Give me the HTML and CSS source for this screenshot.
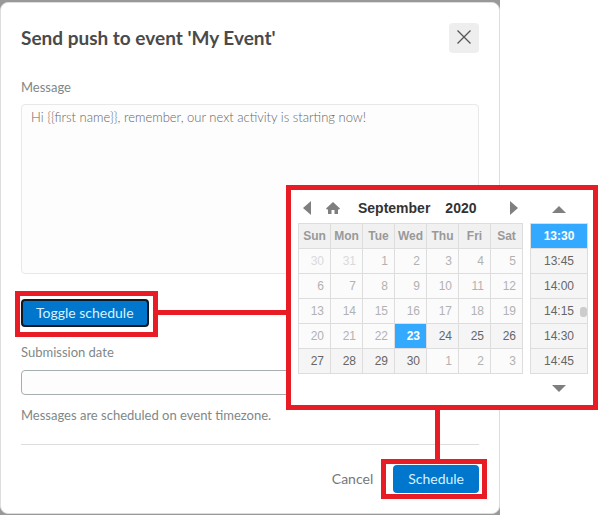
FILE: index.html
```html
<!DOCTYPE html>
<html lang="en">
<head>
    <meta charset="UTF-8">
    <meta name="viewport" content="width=device-width, initial-scale=1.0">
    <title>Send push to event</title>
    <link rel="stylesheet" href="styles.css">
</head>
<body>

    <div class="backdrop">
        <form class="modal">
            <header class="modal-header">
                <h1>Send push to event 'My Event'</h1>
                <button type="button" class="close" aria-label="Close">
                    <svg width="14" height="14" viewBox="0 0 14 14"><path d="M0.5 0.5 L13.5 13.5 M13.5 0.5 L0.5 13.5" fill="none" stroke="#555" stroke-width="1.3"/></svg>
                </button>
            </header>

            <label for="message">Message</label>
            <textarea id="message" placeholder="Hi {{first name}}, remember, our next activity is starting now!"></textarea>

            <button type="button" class="btn btn-toggle">Toggle schedule</button>

            <label for="submissionDate">Submission date</label>
            <input type="text" id="submissionDate">
            <p class="help">Messages are scheduled on event timezone.</p>

            <footer class="modal-footer">
                <button type="button" class="btn-link">Cancel</button>
                <button type="button" class="btn">Schedule</button>
            </footer>
        </form>
    </div>

    <!-- Date and time picker -->
    <div class="picker">
        <div class="calendar">
            <div class="month-bar">
                <button type="button" aria-label="Previous month">
                    <svg width="8" height="14" viewBox="0 0 8 14"><path d="M8 0 V14 L0 7 Z" fill="#7f7f7f"/></svg>
                </button>
                <button type="button" aria-label="Today">
                    <svg width="14" height="12" viewBox="0 0 14 12"><path d="M7 0 L14 6.5 L13 7.5 H12 V12 H8.5 V8 H5.5 V12 H2 V7.5 H1 L0 6.5 Z" fill="#7f7f7f"/></svg>
                </button>
                <span class="month">September</span>
                <span class="year">2020</span>
                <button type="button" class="next" aria-label="Next month">
                    <svg width="8" height="14" viewBox="0 0 8 14"><path d="M0 0 V14 L8 7 Z" fill="#7f7f7f"/></svg>
                </button>
            </div>
            <table>
                <thead>
                    <tr><th>Sun</th><th>Mon</th><th>Tue</th><th>Wed</th><th>Thu</th><th>Fri</th><th>Sat</th></tr>
                </thead>
                <tbody>
                    <tr><td class="past other">30</td><td class="past other">31</td><td class="past">1</td><td class="past">2</td><td class="past">3</td><td class="past">4</td><td class="past">5</td></tr>
                    <tr><td class="past">6</td><td class="past">7</td><td class="past">8</td><td class="past">9</td><td class="past">10</td><td class="past">11</td><td class="past">12</td></tr>
                    <tr><td class="past">13</td><td class="past">14</td><td class="past">15</td><td class="past">16</td><td class="past">17</td><td class="past">18</td><td class="past">19</td></tr>
                    <tr><td class="past">20</td><td class="past">21</td><td class="past">22</td><td class="current">23</td><td>24</td><td>25</td><td>26</td></tr>
                    <tr><td>27</td><td>28</td><td>29</td><td>30</td><td class="past">1</td><td class="past">2</td><td class="past">3</td></tr>
                </tbody>
            </table>
        </div>
        <div class="times">
            <button type="button" class="scroll" aria-label="Earlier">
                <svg width="14" height="7" viewBox="0 0 14 7"><path d="M0 7 H14 L7 0 Z" fill="#7f7f7f"/></svg>
            </button>
            <div class="time-list">
                <button type="button" class="current">13:30</button>
                <button type="button">13:45</button>
                <button type="button">14:00</button>
                <button type="button">14:15</button>
                <button type="button">14:30</button>
                <button type="button">14:45</button>
                <span class="thumb"></span>
            </div>
            <button type="button" class="scroll" aria-label="Later">
                <svg width="14" height="7" viewBox="0 0 14 7"><path d="M0 0 H14 L7 7 Z" fill="#7f7f7f"/></svg>
            </button>
        </div>
    </div>

    <!-- Red callouts -->
    <div class="callout callout-toggle"></div>
    <div class="callout callout-schedule"></div>
    <div class="line line-toggle"></div>
    <div class="line line-schedule"></div>

</body>
</html>
```
FILE: styles.css
```css
* {
    box-sizing: border-box;
}

body {
    margin: 0;
    position: relative;
    background-color: #fff;
    font-family: 'Lato', sans-serif;
    font-size: 13px;
    line-height: 18px;
    color: #7f8888;
}

button {
    padding: 0;
    border: none;
    background: none;
    font: inherit;
    color: inherit;
    cursor: pointer;
}

svg {
    display: block;
}

.backdrop {
    margin-right: 101px;
    padding: 2px 0;
    background-color: #999;
}

.modal {
    display: flex;
    flex-direction: column;
    align-items: flex-start;
    padding: 20px;
    border: 1px solid #ddd;
    border-radius: 8px;
    background-color: #fff;
}

.modal-header {
    display: flex;
    justify-content: space-between;
    align-items: center;
    width: 100%;
    margin-bottom: 25px;
}

h1 {
    margin: 0;
    font-size: 19px;
    line-height: 24px;
    font-weight: 700;
    color: #4a4a4a;
}

.close {
    display: flex;
    justify-content: center;
    align-items: center;
    width: 30px;
    height: 30px;
    padding-bottom: 3px;
    border-radius: 4px;
    background-color: #eee;
}

textarea,
input {
    display: block;
    width: 100%;
    border: 1px solid #a7aeb0;
    border-radius: 4px;
    background-color: #fdfdfd;
    font: inherit;
}

textarea {
    height: 170px;
    margin: 8px 0 25px;
    padding: 3px 9px;
    border-color: #e8e8e8;
    resize: none;
}

textarea::placeholder {
    font-weight: 300;
    color: #666;
}

input {
    height: 25px;
    margin: 9px 0 11px;
    padding: 0 9px;
}

.help {
    width: 100%;
    margin: 0 0 20px;
    padding-bottom: 20px;
    border-bottom: 1px solid #ddd;
}

.btn,
.btn-link {
    height: 28px;
    font-size: 14px;
    color: #777;
}

.btn {
    padding: 0 15px;
    border-radius: 4px;
    background-color: #0077cc;
    color: #d9f1ff;
}

.btn-toggle {
    margin-bottom: 16px;
    padding: 0 13px;
    border: 2px solid #101820;
}

.modal-footer {
    display: flex;
    justify-content: flex-end;
    align-items: center;
    gap: 20px;
    width: 100%;
}

.picker {
    position: absolute;
    top: 185px;
    left: 286px;
    display: flex;
    gap: 7px;
    padding: 5px 5px 3px 7px;
    border: 5px solid #e81c24;
    background-color: #fff;
    font-family: 'Liberation Sans', Arial, sans-serif;
    font-size: 12px;
}

.month-bar {
    display: flex;
    align-items: center;
    height: 28px;
    padding: 0 5px 2px;
    font-size: 14px;
    font-weight: 700;
    color: #333;
}

.month-bar button + button {
    margin-left: 15px;
}

.month {
    margin-left: 18px;
}

.year {
    margin-left: 15px;
}

.month-bar .next {
    margin-left: auto;
}

table {
    border-collapse: collapse;
}

th,
td {
    width: 32px;
    height: 25px;
    padding: 0;
    border: 1px solid #ddd;
    line-height: 18px;
}

th {
    background-color: #f1f1f1;
    text-align: center;
    color: #999;
}

td {
    padding-right: 6px;
    background-color: #f5f5f5;
    text-align: right;
    color: #666;
}

td.past {
    background-color: #fbfbfb;
    color: #b2b2b2;
}

td.other {
    color: #dadada;
}

td.current,
.time-list .current {
    background-color: #33aaff;
    font-weight: 700;
    color: #fff;
}

.scroll {
    display: flex;
    justify-content: center;
    align-items: center;
    width: 100%;
    height: 28px;
}

.time-list {
    position: relative;
    width: 58px;
    border: 1px solid #ddd;
    border-top: none;
}

.time-list button {
    display: block;
    width: 100%;
    height: 25px;
    border-top: 1px solid #ddd;
    background-color: #f5f5f5;
    color: #666;
}

.thumb {
    position: absolute;
    top: 84px;
    right: 0;
    width: 7px;
    height: 10px;
    border-radius: 3px;
    background-color: #ccc;
}

.callout {
    position: absolute;
    border: 5px solid #e81c24;
    pointer-events: none;
}

.callout-toggle {
    top: 291px;
    left: 15px;
    width: 143px;
    height: 46px;
}

.callout-schedule {
    top: 459px;
    left: 381px;
    width: 106px;
    height: 40px;
}

.line {
    position: absolute;
    background-color: #e81c24;
}

.line-toggle {
    top: 310px;
    left: 158px;
    width: 128px;
    height: 5px;
}

.line-schedule {
    top: 409px;
    left: 435px;
    width: 5px;
    height: 50px;
}
```
